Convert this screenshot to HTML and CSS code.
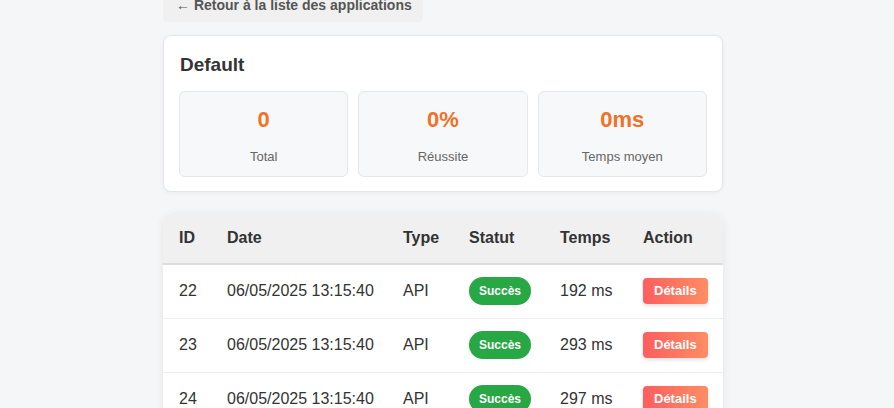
FILE: index.html
```html
<!DOCTYPE html>
<html lang="fr">
<head>
<meta charset="utf-8">
<link rel="stylesheet" href="styles.css">
</head>
<body>
<div class="container">
  <a class="back" href="#">← Retour à la liste des applications</a>
  <section class="card">
    <h2 class="title">Default</h2>
    <div class="stats">
      <div class="stat"><div class="value">0</div><div class="label">Total</div></div>
      <div class="stat"><div class="value">0%</div><div class="label">Réussite</div></div>
      <div class="stat"><div class="value">0ms</div><div class="label">Temps moyen</div></div>
    </div>
  </section>
  <div class="table-wrap">
    <table class="logs">
      <thead>
        <tr>
          <th class="c-id">ID</th>
          <th class="c-date">Date</th>
          <th class="c-type">Type</th>
          <th class="c-status">Statut</th>
          <th class="c-time">Temps</th>
          <th class="c-action">Action</th>
        </tr>
      </thead>
      <tbody>
        <tr><td>22</td><td>06/05/2025 13:15:40</td><td>API</td><td><span class="badge">Succès</span></td><td>192 ms</td><td><button class="btn">Détails</button></td></tr>
        <tr><td>23</td><td>06/05/2025 13:15:40</td><td>API</td><td><span class="badge">Succès</span></td><td>293 ms</td><td><button class="btn">Détails</button></td></tr>
        <tr><td>24</td><td>06/05/2025 13:15:40</td><td>API</td><td><span class="badge">Succès</span></td><td>297 ms</td><td><button class="btn">Détails</button></td></tr>
      </tbody>
    </table>
  </div>
</div>
</body>
</html>
```

FILE: styles.css
```css
html, body {
  margin: 0;
  padding: 0;
}
body {
  background: #f5f6f8;
  font-family: "Liberation Sans", Arial, sans-serif;
  color: #333;
}
.container {
  width: 560px;
  margin: -11px 0 0 163px;
}
.back {
  display: inline-block;
  padding: 8px 11px 9px 13px;
  background: #f0f0f0;
  border-radius: 4px;
  color: #555;
  font-weight: bold;
  font-size: 14px;
  line-height: 16px;
  text-decoration: none;
}
.card {
  margin-top: 13px;
  background: #fff;
  border: 1px solid #e4e6ea;
  border-radius: 8px;
  box-shadow: 0 1px 4px rgba(0,0,0,0.05);
  padding: 17px 15px 14px 15px;
}
.title {
  margin: 0 0 14px 1px;
  font-size: 19px;
  line-height: 24px;
  font-weight: bold;
  color: #333;
}
.stats {
  display: grid;
  grid-template-columns: repeat(3, 1fr);
  gap: 10px;
}
.stat {
  background: #f7f8fa;
  border: 1px solid #e5e7eb;
  border-radius: 6px;
  padding: 15px 10px 11px;
  text-align: center;
}
.value {
  font-size: 22px;
  line-height: 26px;
  font-weight: bold;
  color: #f07226;
}
.label {
  margin-top: 16px;
  font-size: 13px;
  line-height: 16px;
  color: #666;
}
.table-wrap {
  margin-top: 21px;
  background: #fff;
  border-radius: 10px;
  box-shadow: 0 2px 8px rgba(0,0,0,0.08);
  overflow: hidden;
}
.logs {
  width: 100%;
  border-collapse: collapse;
  table-layout: fixed;
}
.logs th {
  background: #f0f0f0;
  text-align: left;
  font-weight: bold;
  font-size: 16px;
  line-height: 18px;
  padding: 16px 16px;
  color: #333;
  border-bottom: 2px solid #dddddd;
}
.logs td {
  font-size: 16px;
  line-height: 18px;
  padding: 12px 16px 13px;
  color: #333;
  border-bottom: 1px solid #eeeeee;
  white-space: nowrap;
  height: 28px;
}
.c-id { width: 16px; }
.c-date { width: 144px; }
.c-type { width: 34px; }
.c-status { width: 59px; }
.c-time { width: 51px; }
.c-action { width: 64px; }
.badge {
  display: inline-block;
  background: #28a745;
  color: #fff;
  font-weight: bold;
  font-size: 12px;
  line-height: 16px;
  padding: 6px 10px;
  border-radius: 14px;
  vertical-align: middle;
}
.btn {
  border: 0;
  font-family: inherit;
  background: linear-gradient(to right, #ff5e5e, #ff8d64);
  color: #fff;
  font-weight: bold;
  font-size: 13px;
  line-height: 16px;
  padding: 5px 11px;
  border-radius: 4px;
  box-shadow: 0 2px 4px rgba(0,0,0,0.12);
  vertical-align: middle;
}
```
